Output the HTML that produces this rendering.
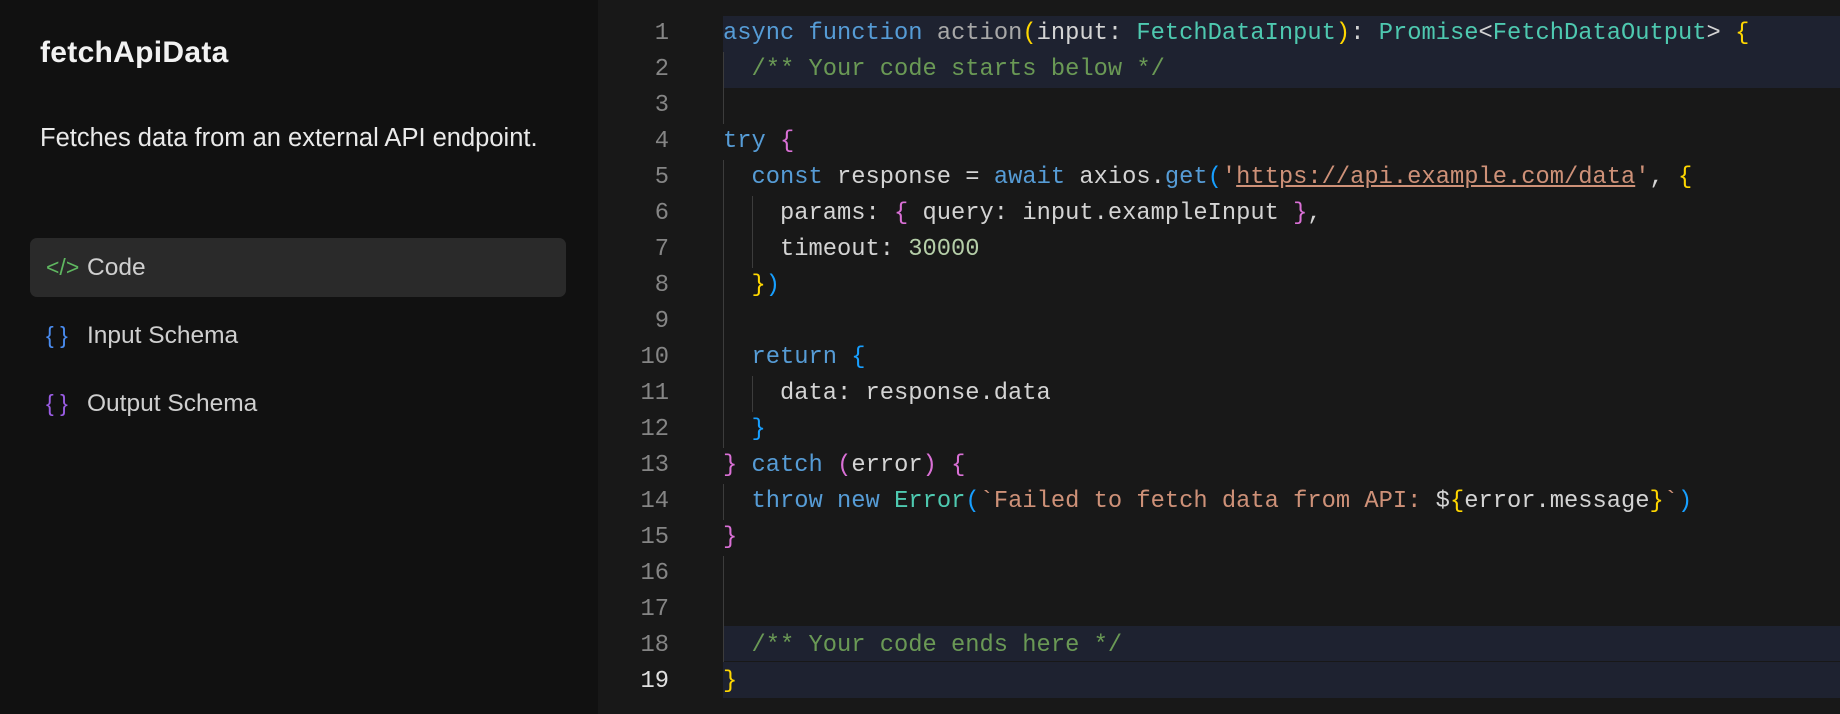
<!DOCTYPE html>
<html><head><meta charset="utf-8"><style>
*{margin:0;padding:0;box-sizing:border-box}
body{width:1840px;height:714px;background:#181818;overflow:hidden;font-family:"Liberation Sans",sans-serif;position:relative}
.side{position:absolute;left:0;top:0;width:598px;height:714px;background:#111111}
.title{position:absolute;left:40px;top:36px;font-size:30px;font-weight:bold;color:#f2f2f2;letter-spacing:0.3px}
.desc{position:absolute;left:40px;top:124px;font-size:25.5px;color:#eaeaea}
.nav{position:absolute;left:30px;width:536px;height:59px;border-radius:7px;font-size:24.5px;color:#cfcfcf}
.nav.act{background:#2a2a2a}
.nav .ic{position:absolute;left:16px;top:0;line-height:59px;font-size:23px}
.nav .tx{position:absolute;left:57px;top:0;line-height:59px}
.ed{position:absolute;left:598px;top:0;width:1242px;height:714px;font-family:"Liberation Mono",monospace;font-size:23.75px}
.ln{position:absolute;left:0;width:71px;text-align:right;color:#858585;height:36px;line-height:36px}
.cl{position:absolute;left:125px;right:0;height:36px;line-height:36px;white-space:pre;color:#d4d4d4}
.hl{background:#1e2230}
.g{position:absolute;width:1px;background:#3c3c3c}
.k{color:#569cd6}.t{color:#4ec9b0}.y{color:#ffd700}.p{color:#da70d6}.b{color:#179fff}.c{color:#6a9955}.s{color:#ce9178}.n{color:#b5cea8}.f{color:#a8a8a8}
</style></head><body>
<div class="side">
<div class="title">fetchApiData</div>
<div class="desc">Fetches data from an external API endpoint.</div>
<div class="nav act" style="top:238px"><span class="ic" style="color:#5fb760">&lt;/&gt;</span><span class="tx">Code</span></div>
<div class="nav" style="top:306px"><span class="ic" style="color:#4a8cf0">{ }</span><span class="tx">Input Schema</span></div>
<div class="nav" style="top:374px"><span class="ic" style="color:#9b5de5">{ }</span><span class="tx">Output Schema</span></div>
</div>
<div class="ed">
<div class="cl hl" style="top:16px;height:72px"></div>
<div class="cl hl" style="top:626px;height:35px"></div>
<div class="cl hl" style="top:662px;height:36px"></div>
<div class="g" style="left:125px;top:52px;height:72px"></div>
<div class="g" style="left:125px;top:160px;height:288px"></div>
<div class="g" style="left:154px;top:196px;height:72px"></div>
<div class="g" style="left:154px;top:376px;height:36px"></div>
<div class="g" style="left:125px;top:484px;height:36px"></div>
<div class="g" style="left:125px;top:556px;height:106px"></div>
<div class="ln" style="top:16px">1</div><div class="ln" style="top:52px">2</div><div class="ln" style="top:88px">3</div><div class="ln" style="top:124px">4</div><div class="ln" style="top:160px">5</div><div class="ln" style="top:196px">6</div><div class="ln" style="top:232px">7</div><div class="ln" style="top:268px">8</div><div class="ln" style="top:304px">9</div><div class="ln" style="top:340px">10</div><div class="ln" style="top:376px">11</div><div class="ln" style="top:412px">12</div><div class="ln" style="top:448px">13</div><div class="ln" style="top:484px">14</div><div class="ln" style="top:520px">15</div><div class="ln" style="top:556px">16</div><div class="ln" style="top:592px">17</div><div class="ln" style="top:628px">18</div><div class="ln" style="top:664px;color:#e0e0e0">19</div>
<div class="cl" style="top:16px"><span class="k">async function</span> <span class="f">action</span><span class="y">(</span>input: <span class="t">FetchDataInput</span><span class="y">)</span>: <span class="t">Promise</span>&lt;<span class="t">FetchDataOutput</span>&gt; <span class="y">{</span></div>
<div class="cl" style="top:52px">  <span class="c">/** Your code starts below */</span></div>
<div class="cl" style="top:124px"><span class="k">try</span> <span class="p">{</span></div>
<div class="cl" style="top:160px">  <span class="k">const</span> response = <span class="k">await</span> axios.<span class="k">get</span><span class="b">(</span><span class="s">'<u>https://api.example.com/data</u>'</span>, <span class="y">{</span></div>
<div class="cl" style="top:196px">    params: <span class="p">{</span> query: input.exampleInput <span class="p">}</span>,</div>
<div class="cl" style="top:232px">    timeout: <span class="n">30000</span></div>
<div class="cl" style="top:268px">  <span class="y">}</span><span class="b">)</span></div>
<div class="cl" style="top:340px">  <span class="k">return</span> <span class="b">{</span></div>
<div class="cl" style="top:376px">    data: response.data</div>
<div class="cl" style="top:412px">  <span class="b">}</span></div>
<div class="cl" style="top:448px"><span class="p">}</span> <span class="k">catch</span> <span class="p">(</span>error<span class="p">)</span> <span class="p">{</span></div>
<div class="cl" style="top:484px">  <span class="k">throw new</span> <span class="t">Error</span><span class="b">(</span><span class="s">`Failed to fetch data from API: </span>$<span class="y">{</span>error.message<span class="y">}</span><span class="s">`</span><span class="b">)</span></div>
<div class="cl" style="top:520px"><span class="p">}</span></div>
<div class="cl" style="top:628px">  <span class="c">/** Your code ends here */</span></div>
<div class="cl" style="top:664px"><span class="y">}</span></div>
</div>
</body></html>
